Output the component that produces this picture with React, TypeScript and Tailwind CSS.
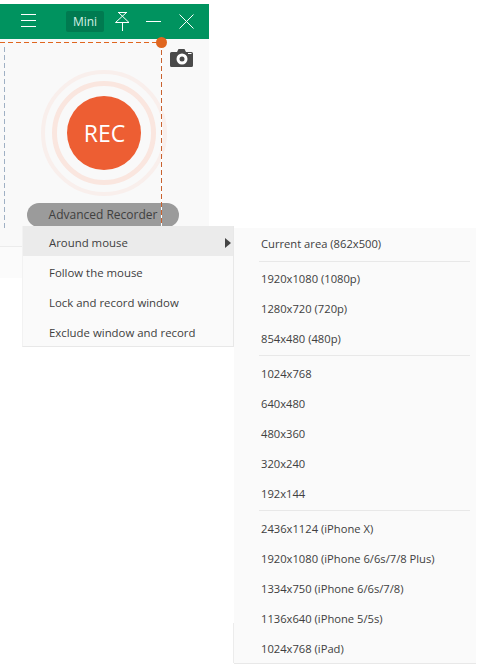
const modes = ['Around mouse', 'Follow the mouse', 'Lock and record window', 'Exclude window and record']

const sizeGroups = [
  { cls: 'pb-[2px]', sizes: ['Current area (862x500)'] },
  { cls: 'border-t border-[#e8e8e8] pt-[2px] pb-px', sizes: ['1920x1080 (1080p)', '1280x720 (720p)', '854x480 (480p)'] },
  { cls: 'border-t border-[#e8e8e8] pt-[3px] pb-px', sizes: ['1024x768', '640x480', '480x360', '320x240', '192x144'] },
  {
    cls: 'border-t border-[#e8e8e8] pt-[3px]',
    sizes: [
      '2436x1124 (iPhone X)',
      '1920x1080 (iPhone 6/6s/7/8 Plus)',
      '1334x750 (iPhone 6/6s/7/8)',
      '1136x640 (iPhone 5/5s)',
      '1024x768 (iPad)',
    ],
  },
]

function TitleBar() {
  return (
    <div className="flex h-[35px] items-center bg-[#00935f] pl-[21px] text-white">
      <svg className="h-[15px] w-[15px]" viewBox="0 0 15 15" fill="none" stroke="#fff" strokeWidth="1">
        <path d="M0 .5h15M0 6.500h15M0 12.500h15" />
      </svg>
      <div className="ml-[30px] flex h-[21px] w-[38px] items-center justify-center rounded-[2px] bg-[#007a50] text-[12px] text-[#d5f0e6]">
        Mini
      </div>
      <svg className="ml-[11px] h-[19px] w-[15px]" viewBox="0 0 15 19" fill="none" stroke="#fff" strokeWidth="1">
        <path d="M3 .5h9M3.500 .5L14 10.500H.5L11.500 .5M7.500 10.500V19" />
      </svg>
      <svg className="ml-[16px] h-[3px] w-[15px]" viewBox="0 0 15 3" fill="none" stroke="#fff" strokeWidth="1">
        <path d="M0 1.500h15" />
      </svg>
      <svg className="ml-[18px] h-[15px] w-[15px]" viewBox="0 0 15 15" fill="none" stroke="#fff" strokeWidth="1">
        <path d="M.5 .5l14 14M14.500 .5l-14 14" />
      </svg>
    </div>
  )
}

function RecButton() {
  return (
    <div className="flex h-[126px] w-[126px] items-center justify-center rounded-full border-[4px] border-[#f9efec]">
      <div className="flex h-[104px] w-[104px] items-center justify-center rounded-full border-[5px] border-[#fae6df]">
        <div className="flex h-[74px] w-[74px] items-center justify-center rounded-full bg-[#ed5e33] pl-px text-[23px] text-white">
          REC
        </div>
      </div>
    </div>
  )
}

// dashed capture frame and the camera button, drawn over the window body
function Selection() {
  return (
    <>
      <div className="absolute left-0 top-[3px] h-px w-[161px] bg-[repeating-linear-gradient(90deg,#e0661f_0_5px,transparent_5px_8px)]" />
      <div className="absolute left-[161px] top-[3px] h-[184px] w-px bg-[repeating-linear-gradient(180deg,#c9622f_0_5px,#ffffff_5px_8px)]" />
      <div className="absolute left-[4px] top-[8px] h-[184px] w-px bg-[repeating-linear-gradient(180deg,#9fb0c4_0_5px,transparent_5px_8px)]" />
      <div className="absolute left-[156px] top-[-2px] h-[11px] w-[11px] rounded-full bg-[#e0661f]" />
      <svg className="absolute left-[170px] top-[10px] h-[18px] w-[23px]" viewBox="0 0 23 18">
        <path
          fill="#4a4a4a"
          d="M1.500 3H7l1.500-3h6L16 3h5.500A1.500 1.500 0 0 1 23 4.500v12a1.500 1.500 0 0 1-1.500 1.500h-20A1.500 1.500 0 0 1 0 16.500v-12A1.500 1.500 0 0 1 1.500 3z"
        />
        <circle cx="12" cy="10" r="5.500" fill="#fff" />
        <circle cx="12" cy="10" r="2.500" fill="#4a4a4a" />
        <path d="M18 4.500h3.500" stroke="#fff" strokeWidth="1" />
      </svg>
    </>
  )
}

function ModeMenu() {
  return (
    <div className="w-[212px] border-r border-b border-l border-[#e8e8e8] border-l-[#f2f2f2] bg-[#fafafa] text-[11.4px]">
      {modes.map((mode, i) => (
        <div
          key={mode}
          className={
            i === 0
              ? 'flex h-[30px] items-center justify-between bg-[#ebebeb] pt-[3px] pr-[2px] pl-[26px]'
              : 'flex h-[30px] items-center pt-[3px] pl-[26px]'
          }
        >
          {mode}
          {i === 0 && (
            <svg className="h-[10px] w-[6px]" viewBox="0 0 6 10">
              <path d="M0 0l6 5-6 5z" fill="#444" />
            </svg>
          )}
        </div>
      ))}
    </div>
  )
}

function SizeMenu() {
  return (
    <div className="relative mt-[2px] h-[436px] w-[242px] border-b border-[#e8e8e8] bg-[#fafafa] pt-px pr-[6px] pl-[25px] text-[11.2px]">
      {sizeGroups.map((group) => (
        <div key={group.sizes[0]} className={group.cls}>
          {group.sizes.map((size) => (
            <div key={size} className="flex h-[30px] items-center pl-[2px]">
              {size}
            </div>
          ))}
        </div>
      ))}
      <div className="absolute bottom-0 left-[-1px] h-[40px] w-px bg-[#ececec]" />
    </div>
  )
}

export default function App() {
  return (
    <div className="relative h-[664px] w-[477px] overflow-hidden bg-white pt-[4px] font-['Open_Sans',sans-serif] text-[#404040]">
      <div className="w-[209px]">
        <TitleBar />
        <div className="relative flex h-[207px] flex-col gap-[7px] bg-[#f9f9f9] pt-[31px]">
          <div className="pl-[41px]">
            <RecButton />
          </div>
          <div className="pl-[27px]">
            <div className="flex h-[24px] w-[152px] items-center justify-center rounded-full bg-[#9b9b9b] text-[12px]">
              Advanced Recorder
            </div>
          </div>
          <Selection />
        </div>
        <div className="h-[32px] border-t border-[#ececec] bg-[#fbfbfb]" />
      </div>

      <div className="absolute top-[226px] left-[22px] flex items-start">
        <ModeMenu />
        <SizeMenu />
      </div>
    </div>
  )
}
